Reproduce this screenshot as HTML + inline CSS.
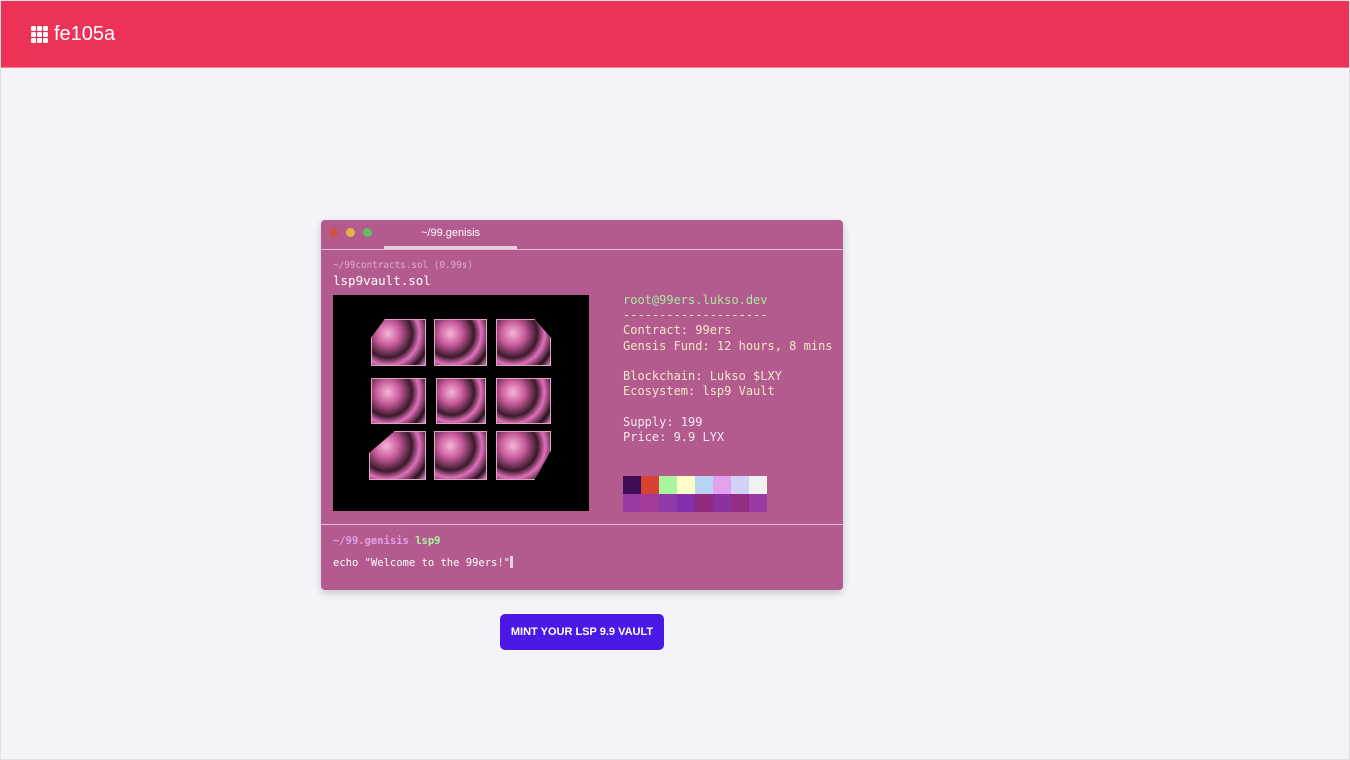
<!DOCTYPE html>
<html><head><meta charset="utf-8"><style>
*{box-sizing:border-box;margin:0;padding:0}
body{width:1350px;height:760px;background:#f3f4f8;position:relative;overflow:hidden;font-family:"Liberation Sans",sans-serif}
.frame{position:absolute;left:0;top:0;width:1350px;height:760px;border:1px solid #dfe0e6;pointer-events:none}
.hdr{position:absolute;left:0;top:0;width:1350px;height:68px;background:#ec3257;border-bottom:1px solid #f07a90}
.logo{position:absolute;left:31px;top:26px;display:grid;grid-template-columns:repeat(3,5px);gap:1px}
.logo i{width:5px;height:5px;background:#fff;border-radius:1.5px;display:block}
.brand{position:absolute;left:54px;top:23px;color:#fff;font-size:20px}
.term{position:absolute;left:321px;top:220px;width:522px;height:370px;background:#b35b8e;border-radius:4px;box-shadow:0 3px 8px rgba(0,0,0,.18)}
.dot{position:absolute;top:8px;width:9px;height:9px;border-radius:50%}
.mono{font-family:"DejaVu Sans Mono","Liberation Mono",monospace}
.t{position:absolute;white-space:pre}
.img{position:absolute;left:12px;top:75px;width:256px;height:216px;background:#000}
.tile{position:absolute;background:radial-gradient(circle at 30% 30%,#f5b6d8 0,#c85a9a 25%,#3a1a2c 50%,#e070b8 65%,#2a1020 85%,#d890c0 100%);border:1px solid #e0a0c8}
.sw{position:absolute;width:18px;height:18px}
.btn{position:absolute;left:500px;top:614px;width:164px;height:36px;background:#4a19e6;border-radius:5px;color:#fff;font-size:11px;font-weight:bold;text-align:center;line-height:36px}
</style></head><body>
<div class="hdr">
<div class="logo"><i></i><i></i><i></i><i></i><i></i><i></i><i></i><i></i><i></i></div>
<div class="brand">fe105a</div>
</div>
<div class="term">
<div class="dot" style="left:8px;background:#d2503f"></div>
<div class="dot" style="left:25px;background:#e0b440"></div>
<div class="dot" style="left:42px;background:#5fc05a"></div>
<div class="t" style="left:100px;top:7px;color:#fff;font-size:11px">~/99.genisis</div>
<div style="position:absolute;left:63px;top:26px;width:133px;height:3px;background:#e6d0dd"></div>
<div style="position:absolute;left:0;top:29px;width:522px;height:1px;background:#e3bdd3"></div>
<div class="t mono" style="left:12px;top:40px;color:#dcaecb;font-size:9.3px">~/99contracts.sol (0.99s)</div>
<div class="t mono" style="left:12px;top:53px;color:#fff;font-size:12.5px">lsp9vault.sol</div>
<div class="img">
<div class="tile" style="left:38px;top:24px;width:55px;height:47px;clip-path:polygon(25% 0,100% 0,100% 100%,0 100%,0 40%)"></div>
<div class="tile" style="left:101px;top:24px;width:53px;height:47px"></div>
<div class="tile" style="left:163px;top:24px;width:55px;height:47px;clip-path:polygon(0 0,70% 0,100% 40%,100% 100%,0 100%)"></div>
<div class="tile" style="left:38px;top:83px;width:55px;height:46px"></div>
<div class="tile" style="left:103px;top:83px;width:50px;height:46px"></div>
<div class="tile" style="left:163px;top:83px;width:55px;height:46px"></div>
<div class="tile" style="left:36px;top:136px;width:57px;height:49px;clip-path:polygon(45% 0,100% 0,100% 100%,0 100%,0 45%)"></div>
<div class="tile" style="left:101px;top:136px;width:53px;height:49px"></div>
<div class="tile" style="left:163px;top:136px;width:55px;height:49px;clip-path:polygon(0 0,100% 0,100% 40%,70% 100%,0 100%)"></div>
</div>
<div class="t mono" style="left:302px;top:73px;color:#a9e7a0;font-size:12px;line-height:15.3px">root@99ers.lukso.dev</div>
<div class="t mono" style="left:302px;top:88px;color:#f4e7c4;font-size:12px;line-height:15.3px">--------------------
Contract: 99ers
Gensis Fund: 12 hours, 8 mins

Blockchain: Lukso $LXY
Ecosystem: lsp9 Vault

<span style="color:#f3eaf0">Supply: 199
Price: 9.9 LYX</span></div>
<div class="sw" style="left:302px;top:256px;background:#3e0d55"></div>
<div class="sw" style="left:320px;top:256px;background:#d74232"></div>
<div class="sw" style="left:338px;top:256px;background:#a9f59e"></div>
<div class="sw" style="left:356px;top:256px;background:#fdfdc9"></div>
<div class="sw" style="left:374px;top:256px;background:#b7d4f5"></div>
<div class="sw" style="left:392px;top:256px;background:#e3a0ec"></div>
<div class="sw" style="left:410px;top:256px;background:#d0d3f5"></div>
<div class="sw" style="left:428px;top:256px;background:#f1f1f1"></div>
<div class="sw" style="left:302px;top:274px;background:#9a3aa3"></div>
<div class="sw" style="left:320px;top:274px;background:#a23a9a"></div>
<div class="sw" style="left:338px;top:274px;background:#8e3aa8"></div>
<div class="sw" style="left:356px;top:274px;background:#8430ad"></div>
<div class="sw" style="left:374px;top:274px;background:#902c7b"></div>
<div class="sw" style="left:392px;top:274px;background:#8a32a2"></div>
<div class="sw" style="left:410px;top:274px;background:#922e85"></div>
<div class="sw" style="left:428px;top:274px;background:#9a3aa3"></div>
<div style="position:absolute;left:0;top:304px;width:522px;height:1px;background:#e3bdd3"></div>
<div class="t mono" style="left:12px;top:315px;font-size:10.5px;font-weight:bold;color:#e0a0e8">~/99.genisis <span style="color:#a9f5a0">lsp9</span></div>
<div class="t mono" style="left:12px;top:336px;font-size:10.5px;color:#fff">echo "Welcome to the 99ers!"<span style="display:inline-block;width:3px;height:12px;background:#e8d0e0;vertical-align:-2px"></span></div>
</div>
<div class="btn">MINT YOUR LSP 9.9 VAULT</div>
<div class="frame"></div>
</body></html>
